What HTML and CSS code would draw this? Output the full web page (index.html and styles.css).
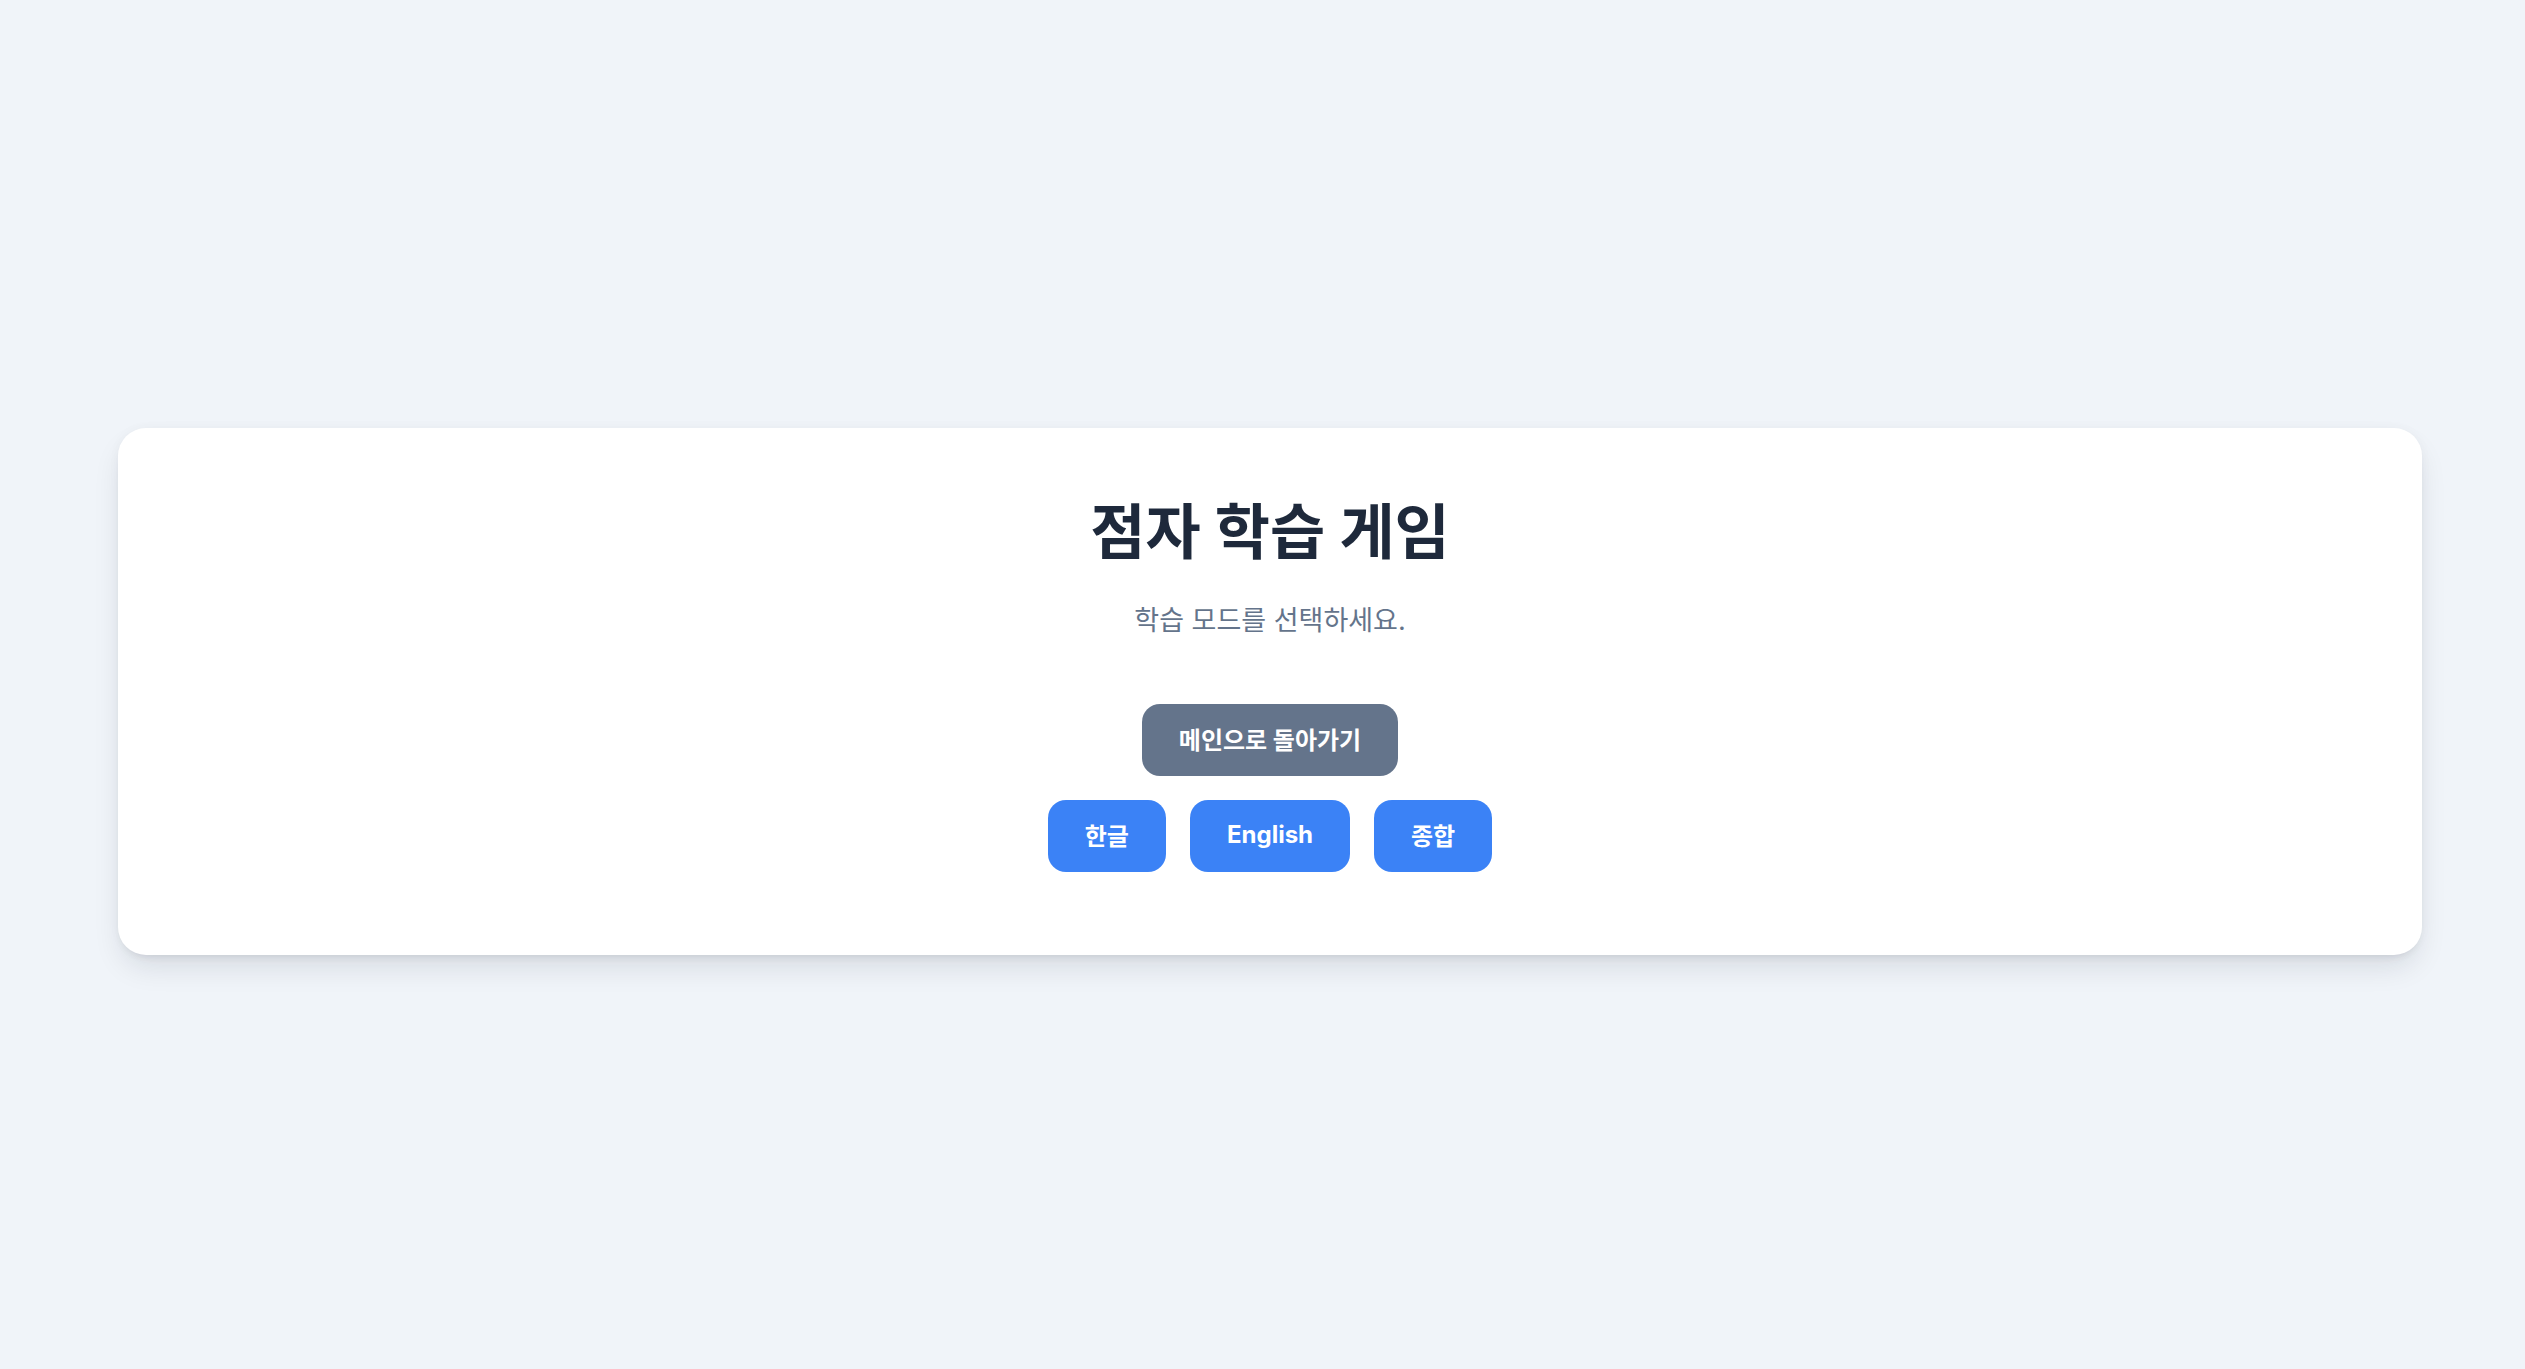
FILE: index.html
```html
<!DOCTYPE html>
<html lang="ko">
<head>
<meta charset="utf-8">
<title>점자 학습 게임</title>
<link rel="stylesheet" href="styles.css">
</head>
<body>
<div class="page">
  <main class="card">
    <h1 class="title">점자 학습 게임</h1>
    <p class="subtitle">학습 모드를 선택하세요.</p>
    <div class="actions">
      <button class="btn btn-gray">메인으로 돌아가기</button>
      <div class="modes">
        <button class="btn btn-blue">한글</button>
        <button class="btn btn-blue">English</button>
        <button class="btn btn-blue">종합</button>
      </div>
    </div>
  </main>
</div>
</body>
</html>
```

FILE: styles.css
```css
* { box-sizing: border-box; }
html, body {
  margin: 0;
  padding: 0;
  background: #f0f4f9;
  font-family: Inter, "Noto Sans CJK KR", "Noto Sans", sans-serif;
}
.page {
  min-height: 100vh;
  display: flex;
  align-items: center;
  justify-content: center;
  padding: 14px 0 0 15px;
}
.card {
  width: 2304px;
  background: #ffffff;
  border-radius: 28px;
  box-shadow: 0 15px 30px -5px rgba(15, 23, 42, 0.12), 0 6px 10px -6px rgba(15, 23, 42, 0.10), 0 0 12px rgba(15, 23, 42, 0.03);
  padding: 68px 0 83px;
  display: flex;
  flex-direction: column;
  align-items: center;
}
.title {
  margin: 0;
  font-size: 60px;
  line-height: 72px;
  font-weight: 700;
  color: #1e293b;
}
.subtitle {
  margin: 33px 0 0;
  font-size: 27px;
  line-height: 40px;
  font-weight: 400;
  color: #64748b;
}
.actions {
  margin-top: 63px;
  display: flex;
  flex-direction: column;
  align-items: center;
  gap: 24px;
}
.modes {
  display: flex;
  gap: 24px;
}
.btn {
  border: none;
  height: 72px;
  padding: 0 37px 3px;
  border-radius: 18px;
  font-family: Inter, "Noto Sans CJK KR", "Noto Sans", sans-serif;
  font-size: 24px;
  font-weight: 700;
  color: #ffffff;
  cursor: pointer;
}
.btn-gray { background: #64748b; }
.btn-blue { background: #3b82f6; }
```
